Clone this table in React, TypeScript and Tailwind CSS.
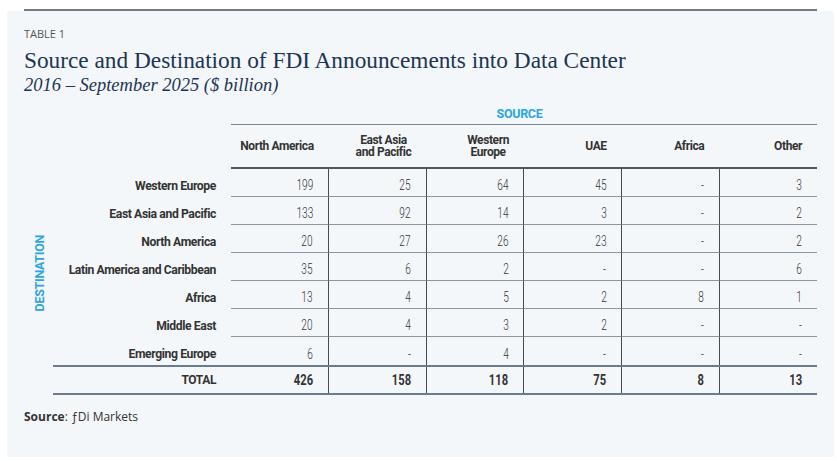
import React from 'react';

const cond = "font-['Roboto','Liberation_Sans',sans-serif]";

const columns: string[][] = [
  ['North America'],
  ['East Asia', 'and Pacific'],
  ['Western', 'Europe'],
  ['UAE'],
  ['Africa'],
  ['Other'],
];

const rows: { label: string; values: string[] }[] = [
  { label: 'Western Europe', values: ['199', '25', '64', '45', '-', '3'] },
  { label: 'East Asia and Pacific', values: ['133', '92', '14', '3', '-', '2'] },
  { label: 'North America', values: ['20', '27', '26', '23', '-', '2'] },
  { label: 'Latin America and Caribbean', values: ['35', '6', '2', '-', '-', '6'] },
  { label: 'Africa', values: ['13', '4', '5', '2', '8', '1'] },
  { label: 'Middle East', values: ['20', '4', '3', '2', '-', '-'] },
  { label: 'Emerging Europe', values: ['6', '-', '4', '-', '-', '-'] },
];

const totals = ['426', '158', '118', '75', '8', '13'];

const App: React.FC = () => {
  return (
    <div className="min-h-screen bg-white">
      {/* top rule */}
      <div className="ml-[24px] mt-[9px] h-[2px] w-[793px] bg-[#6e7a88]"></div>

      {/* panel */}
      <div className="ml-[7px] h-[446px] w-[827px] bg-[#f4f7fa] pl-[17px]">
        <p className="pt-[16px] text-[11px] leading-[14px] text-[#555] font-['Open_Sans','Liberation_Sans',sans-serif]">
          TABLE 1
        </p>
        <h1 className="mt-[5px] text-[23.3px] leading-[28px] text-[#1c3553] font-['Liberation_Serif','DejaVu_Serif',serif]">
          Source and Destination of FDI Announcements into Data Center
        </h1>
        <p className="text-[18.5px] leading-[22px] italic text-[#1c3553] font-['Liberation_Serif','DejaVu_Serif',serif]">
          2016 – September 2025 ($ billion)
        </p>

        <div className={`w-[793px] ${cond}`}>
          {/* source header */}
          <div className="mt-[10px] ml-[207px] w-[586px] pr-[9px] text-center text-[12.5px] font-bold leading-[15px] tracking-[-0.3px] text-[#2ba6de]">
            SOURCE
          </div>
          <div className="mt-[3px] ml-[207px] flex h-[45px] w-[586px] border-t border-b-2 border-t-[#7d8794] border-b-[#555]">
            {columns.map((c, i) => (
              <div
                key={i}
                className="flex flex-1 items-center justify-end pr-[15px] text-center whitespace-nowrap text-[12px] font-bold leading-[12.5px] tracking-[-0.4px] text-[#333]"
              >
                <div>
                  {c.map((line) => (
                    <div key={line}>{line}</div>
                  ))}
                </div>
              </div>
            ))}
          </div>

          {/* body */}
          <div className="flex">
            <div className="w-[29px] pl-[3px] pt-[66px] flex items-start justify-center">
              <span className="[writing-mode:vertical-rl] rotate-180 whitespace-nowrap text-[12.5px] font-bold leading-[14px] tracking-[-0.3px] text-[#2ba6de]">
                DESTINATION
              </span>
            </div>
            <div className="w-[764px]">
              {rows.map((r, ri) => (
                <div key={r.label} className="flex h-[28px]">
                  <div className="flex w-[178px] items-center justify-end pr-[15px] pt-[6px] whitespace-nowrap text-[12.2px] font-bold tracking-[-0.4px] text-[#333]">
                    {r.label}
                  </div>
                  {r.values.map((v, i) => (
                    <div
                      key={i}
                      className={`flex flex-1 items-center justify-end pr-[15px] pt-[6px] text-[14px] font-light text-[#333] ${
                        i > 0 ? 'border-l-[1.5px] border-l-[#4a4a4a]' : ''
                      } ${ri < rows.length - 1 ? 'border-b border-b-[#8e959c]' : ''}`}
                    >
                      <span className="inline-block origin-right scale-x-[0.72]">{v}</span>
                    </div>
                  ))}
                </div>
              ))}
              {/* total */}
              <div className="flex h-[30px] border-y-2 border-[#6b7c8e]">
                <div className="flex w-[178px] items-center justify-end pr-[15px] text-[12px] font-bold tracking-[-0.4px] text-[#333]">
                  TOTAL
                </div>
                {totals.map((v, i) => (
                  <div
                    key={i}
                    className={`flex flex-1 items-center justify-end pr-[15px] text-[14px] font-bold text-[#333] ${
                      i > 0 ? 'border-l-[1.5px] border-l-[#4a4a4a]' : ''
                    }`}
                  >
                    <span className="inline-block origin-right scale-x-[0.8]">{v}</span>
                  </div>
                ))}
              </div>
            </div>
          </div>
        </div>

        <p className="mt-[14px] text-[12px] leading-[16px] text-[#333] font-['Open_Sans','Liberation_Sans',sans-serif]">
          <span className="font-bold">Source</span>: ƒDi Markets
        </p>
      </div>
    </div>
  );
};

export default App;
